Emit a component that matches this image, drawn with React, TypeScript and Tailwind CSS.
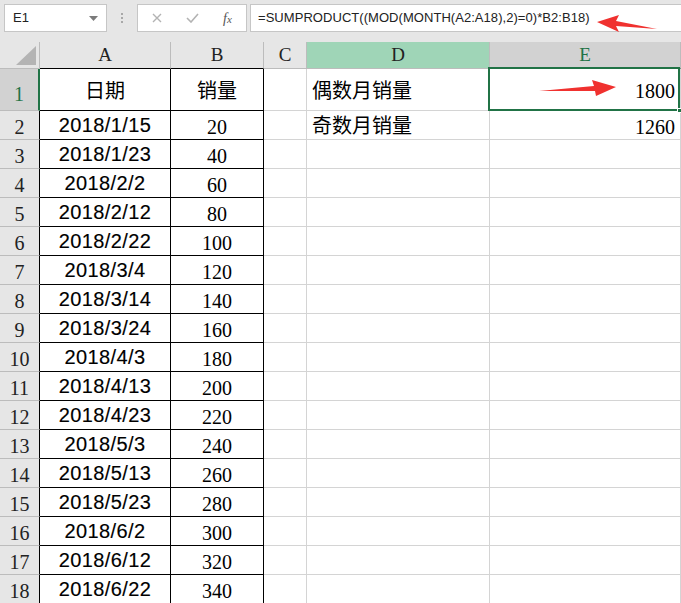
import React from 'react';

const rows: [string, string][] = [
  ['2018/1/15', '20'],
  ['2018/1/23', '40'],
  ['2018/2/2', '60'],
  ['2018/2/12', '80'],
  ['2018/2/22', '100'],
  ['2018/3/4', '120'],
  ['2018/3/14', '140'],
  ['2018/3/24', '160'],
  ['2018/4/3', '180'],
  ['2018/4/13', '200'],
  ['2018/4/23', '220'],
  ['2018/5/3', '240'],
  ['2018/5/13', '260'],
  ['2018/5/23', '280'],
  ['2018/6/2', '300'],
  ['2018/6/12', '320'],
  ['2018/6/22', '340'],
];

const serif = "font-['Liberation_Serif','Noto_Sans_CJK_SC',serif]";
const cjk = "font-['Noto_Sans_CJK_SC',sans-serif]";

const FormulaBar = () => (
  <div className="h-[42px] bg-[#e6e6e6] flex items-start pt-[4px] pl-[4px] text-[13px] text-[#222] font-['Liberation_Sans',sans-serif]">
    <div className="w-[103px] h-[28px] bg-white border border-[#c6c6c6] flex items-center justify-between pl-[8px] pr-[8px]">
      <span>E1</span>
      <svg width="9" height="5" viewBox="0 0 9 5">
        <path d="M0 0 L9 0 L4.5 5 Z" fill="#7b7b7b" />
      </svg>
    </div>
    <div className="w-[30px] h-[28px] flex flex-col items-center justify-center gap-[2px]">
      <span className="w-[2px] h-[2px] bg-[#a8a8a8]" />
      <span className="w-[2px] h-[2px] bg-[#a8a8a8]" />
      <span className="w-[2px] h-[2px] bg-[#a8a8a8]" />
    </div>
    <div className="w-[110px] h-[28px] bg-white border border-[#c6c6c6] flex items-center">
      <svg className="ml-[14px]" width="10" height="10" viewBox="0 0 10 10">
        <path d="M1 1 L9 9 M9 1 L1 9" stroke="#b3b3b3" strokeWidth="1.4" />
      </svg>
      <svg className="ml-[24px]" width="13" height="10" viewBox="0 0 13 10">
        <path d="M1 5 L5 9 L12 1" stroke="#b3b3b3" strokeWidth="1.6" fill="none" />
      </svg>
      <span className={`ml-[24px] italic text-[14px] text-[#555] ${serif}`}>
        f<span className="text-[11px]">x</span>
      </span>
    </div>
    <div className="relative ml-[3px] flex-1 h-[28px] bg-white border border-r-0 border-[#c6c6c6] flex items-center pl-[7px]">
      <span className="tracking-[0.05px]">=SUMPRODUCT((MOD(MONTH(A2:A18),2)=0)*B2:B18)</span>
      <svg className="absolute left-[344px] top-[8px]" width="64" height="22" viewBox="0 0 64 22">
        <path d="M2 9 L24 2 L21 8 L62 16 L21 13 L24 19 Z" fill="#f0312f" />
      </svg>
    </div>
  </div>
);

export default function App() {
  const head = 'h-[27px] border-r border-b border-[#bcbcbc] flex items-center justify-center text-[19px] text-[#222]';
  const grid = 'border-r border-b border-[#d4d4d4]';
  return (
    <div className="w-[681px] h-[603px] overflow-hidden bg-white">
      <FormulaBar />
      <div className={`grid grid-cols-[40px_131px_93px_43px_183px_191px] ${serif}`}>
        {/* column headers */}
        <div className={`${head} relative bg-[#e6e6e6]`}>
          <svg className="absolute right-[3px] bottom-[3px]" width="20" height="19" viewBox="0 0 20 19">
            <path d="M20 0 L20 19 L0 19 Z" fill="#b4b4b4" />
          </svg>
        </div>
        <div className={`${head} bg-[#e6e6e6] border-b-black`}>A</div>
        <div className={`${head} bg-[#e6e6e6] border-b-black`}>B</div>
        <div className={`${head} bg-[#e6e6e6]`}>C</div>
        <div className={`${head} bg-[#9fd5b7]`}>D</div>
        <div className={`${head} bg-[#d2d2d2] text-[#217346] border-b-[#217346]`}>E</div>

        {/* row 1 */}
        <div className="h-[42px] bg-[#d2d2d2] border-r-2 border-r-[#217346] border-b border-b-[#bcbcbc] flex items-end justify-center pb-[1px] text-[20px] text-[#217346]">
          1
        </div>
        <div className={`h-[42px] border-r border-b border-black flex items-center justify-center text-[20px] text-black ${cjk}`}>日期</div>
        <div className={`h-[42px] border-r border-b border-black flex items-center justify-center text-[20px] text-black ${cjk}`}>销量</div>
        <div className={`h-[42px] ${grid}`} />
        <div className={`h-[42px] ${grid} flex items-center pl-[5px] text-[20px] text-black ${cjk}`}>偶数月销量</div>
        <div className={`h-[42px] ${grid} relative flex items-center justify-end pr-[5px] text-[20px] text-black`}>
          <svg className="absolute left-[46px] top-[8px]" width="82" height="22" viewBox="0 0 82 22">
            <path d="M3 14 L58 9 L56 3 L80 10 L60 19 L59 14 Z" fill="#f0312f" />
          </svg>
          <span className="pt-[2px]">1800</span>
          <div className="absolute -left-[2px] -top-[2px] right-0 -bottom-[1px] border-2 border-[#217346] pointer-events-none" />
          <div className="absolute -right-[2px] -bottom-[3px] w-[5px] h-[5px] bg-[#217346] border border-white" />
        </div>

        {rows.map(([date, qty], i) => {
          const n = i + 2;
          return (
            <React.Fragment key={n}>
              <div className="h-[29px] bg-[#e6e6e6] border-r border-r-black border-b border-b-[#bcbcbc] flex items-end justify-center text-[20px] text-[#222] leading-[24px]">
                {n}
              </div>
              <div className="h-[29px] border-r border-b border-black flex items-center justify-center text-[20px] text-black tracking-[0.4px] font-['Liberation_Sans',sans-serif] [-webkit-text-stroke:0.15px_black]">
                {date}
              </div>
              <div className="h-[29px] border-r border-b border-black flex items-center justify-center text-[20px] text-black pt-[3px]">
                {qty}
              </div>
              <div className={`h-[29px] ${grid}`} />
              <div className={`h-[29px] ${grid} flex items-center pl-[5px] text-[20px] text-black ${cjk}`}>
                {n === 2 ? '奇数月销量' : ''}
              </div>
              <div className={`h-[29px] ${grid} flex items-center justify-end pr-[5px] text-[20px] text-black pt-[3px]`}>
                {n === 2 ? '1260' : ''}
              </div>
            </React.Fragment>
          );
        })}
      </div>
    </div>
  );
}
